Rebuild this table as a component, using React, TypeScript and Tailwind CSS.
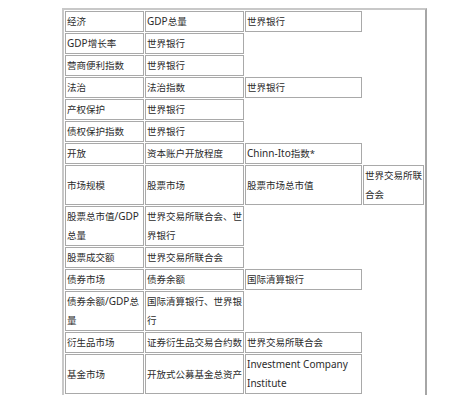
import { Fragment } from "react";

const rows: string[][] = [
  ["经济", "GDP总量", "世界银行", ""],
  ["GDP增长率", "世界银行", "", ""],
  ["营商便利指数", "世界银行", "", ""],
  ["法治", "法治指数", "世界银行", ""],
  ["产权保护", "世界银行", "", ""],
  ["债权保护指数", "世界银行", "", ""],
  ["开放", "资本账户开放程度", "Chinn-Ito指数*", ""],
  ["市场规模", "股票市场", "股票市场总市值", "世界交易所联\n合会"],
  ["股票总市值/GDP\n总量", "世界交易所联合会、世\n界银行", "", ""],
  ["股票成交额", "世界交易所联合会", "", ""],
  ["债券市场", "债券余额", "国际清算银行", ""],
  ["债券余额/GDP总\n量", "国际清算银行、世界银\n行", "", ""],
  ["衍生品市场", "证券衍生品交易合约数", "世界交易所联合会", ""],
  ["基金市场", "开放式公募基金总资产", "Investment Company\nInstitute", ""],
];

const widths = ["w-[79px]", "w-[99px]", "w-[117px]", "w-[61px]"];

// latin runs render a bit larger than the CJK ones, like YaHei does
const Text = ({ value }: { value: string }) => {
  const lines = value.split("\n");
  return (
    <>
      {lines.map((line, k) => (
        <Fragment key={k}>
          {k > 0 && <br />}
          <span className="whitespace-nowrap">
            {line.split(/([A-Za-z0-9*\-/ ]+)/).map((part, n) =>
              /[A-Za-z]/.test(part) ? (
                <span key={n} className="text-[10px]">
                  {part}
                </span>
              ) : (
                <Fragment key={n}>{part}</Fragment>
              )
            )}
          </span>
        </Fragment>
      ))}
    </>
  );
};

const App = () => {
  return (
    <div
      className="min-h-[395px] bg-white pt-[8px] pl-[62px] text-[9.5px] leading-[19px] text-[#2b2b2b]"
      style={{ fontFamily: '"Noto Sans", "Noto Sans CJK SC", sans-serif' }}
    >
      <table className="table-fixed w-[365px] border-separate border-spacing-[1px] border-2 border-t-[#c8c8c8] border-l-[#c8c8c8] border-r-[#a6a6a6] border-b-[#a6a6a6]">
        <tbody>
          {rows.map((row, i) => (
            <tr key={i}>
              {row.map((cell, j) => (
                <td
                  key={j}
                  className={
                    (i === 0 ? widths[j] + " " : "") +
                    (cell
                      ? "border border-[#a9a9a9] pl-[1px] pr-0 py-0 align-middle text-left"
                      : "p-0")
                  }
                >
                  <Text value={cell} />
                </td>
              ))}
            </tr>
          ))}
        </tbody>
      </table>
    </div>
  );
};

export default App;
